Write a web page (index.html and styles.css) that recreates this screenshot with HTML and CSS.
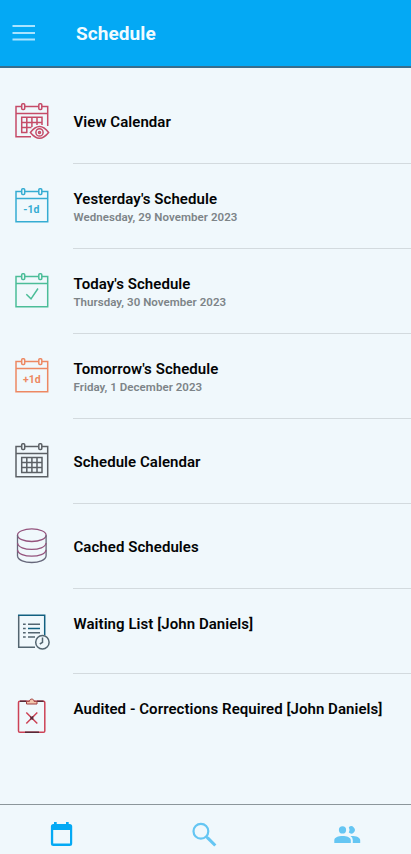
FILE: index.html
```html
<!DOCTYPE html>
<html lang="en">
<head>
<meta charset="utf-8">
<title>Schedule</title>
<link rel="stylesheet" href="styles.css">
</head>
<body>
<svg width="0" height="0" class="defs">
  <defs>
    <g id="cal">
      <path d="M21.5 16.5H16V46.7H47.7V16.5H42M25 16.5H38.5M16 23.4H47.7"/>
      <rect x="21.7" y="13.7" width="3" height="5.8" rx="1"/>
      <rect x="38.8" y="13.7" width="3" height="5.8" rx="1"/>
    </g>
  </defs>
</svg>
<div class="app">
  <header class="bar">
    <svg class="menu" viewBox="0 0 24 18"><path d="M.5 2H23M.5 9H23M.5 15.5H23"/></svg>
    <h1>Schedule</h1>
  </header>
  <main class="list">
    <div class="row">
      <svg class="icon red" viewBox="0 0 70 70">
        <path d="M21.5 16.5H16V46.7H31M47.7 36V16.5H42M25 16.5H38.5M16 23.4H47.7"/>
        <rect x="21.7" y="13.7" width="3" height="5.8" rx="1"/>
        <rect x="38.8" y="13.7" width="3" height="5.8" rx="1"/>
        <path d="M27.5 42.5H21.7V27.3H42V35M21.7 32.4H42M21.7 37.5H31.5M26.8 27.3V42.5M31.9 27.3V37M37 27.3V35"/>
        <path d="M30.4 42.5Q39.5 30.5 48.6 42.5Q39.5 54 30.4 42.5Z"/>
        <circle cx="39.5" cy="42.4" r="3.6"/><circle cx="39.5" cy="42.4" r="1"/>
      </svg>
      <div class="text"><b>View Calendar</b></div>
    </div>
    <div class="row double">
      <svg class="icon blue" viewBox="0 0 70 70"><use href="#cal"/><text x="31.4" y="37.7">-1d</text></svg>
      <div class="text"><b>Yesterday's Schedule</b><span>Wednesday, 29 November 2023</span></div>
    </div>
    <div class="row double">
      <svg class="icon green" viewBox="0 0 70 70"><use href="#cal"/><path d="M26.3 34.3L31 38.8L38 28.5"/></svg>
      <div class="text"><b>Today's Schedule</b><span>Thursday, 30 November 2023</span></div>
    </div>
    <div class="row double">
      <svg class="icon orange" viewBox="0 0 70 70"><use href="#cal"/><text x="31.8" y="38">+1d</text></svg>
      <div class="text"><b>Tomorrow's Schedule</b><span>Friday, 1 December 2023</span></div>
    </div>
    <div class="row">
      <svg class="icon gray" viewBox="0 0 70 70"><use href="#cal"/><path d="M21.7 27.5H42V42.6H21.7ZM21.7 32.5H42M21.7 37.5H42M26.8 27.5V42.6M31.9 27.5V42.6M37 27.5V42.6"/></svg>
      <div class="text"><b>Schedule Calendar</b></div>
    </div>
    <div class="row">
      <svg class="icon purple" viewBox="0 0 70 70">
        <ellipse cx="31.8" cy="20.2" rx="14.3" ry="6.3"/>
        <path class="side" d="M17.5 20.2V41.2M46.1 20.2V41.2"/>
        <path d="M17.5 28C18.5 36.5 45 36.5 46.1 28M17.5 34.8C18.5 43.3 45 43.3 46.1 34.8"/>
        <path class="side" d="M17.5 41.2C18.5 49.6 45 49.6 46.1 41.2"/>
      </svg>
      <div class="text"><b>Cached Schedules</b></div>
    </div>
    <div class="row raised">
      <svg class="icon slate" viewBox="0 0 70 70">
        <path d="M35 47.3H18.7V15.3"/>
        <path class="navy" d="M18 15.3H44.7V35"/>
        <path d="M23 24.2H25.7M23 28.5H25.7M23 32.7H25.7M23 37H25.7M28 24.2H40M28 32.7H40M28 37H35"/>
        <path class="navy" d="M28 28.5H40"/>
        <circle cx="42.4" cy="42.2" r="6.7"/>
        <path d="M42.5 37.6V42.3L39.8 44"/>
      </svg>
      <div class="text"><b>Waiting List [John Daniels]</b></div>
    </div>
    <div class="row raised">
      <svg class="icon crimson" viewBox="0 0 70 70">
        <rect x="18.5" y="16.3" width="26.3" height="31" rx="1.3"/>
        <path class="dark" d="M20 16.3H26.5M37 16.3H43.5M25 47.3H39"/>
        <path class="clip" d="M26.5 16.3H29.5C29.5 13.3 34 13.3 34 16.3H37V19H26.5Z"/>
        <path d="M26.3 27.5L37.3 38.5M37.3 27.5L26.3 38.5"/>
        <path class="dark" d="M30.3 31.5L33.3 34.5M33.3 31.5L30.3 34.5"/>
      </svg>
      <div class="text"><b>Audited - Corrections Required [John Daniels]</b></div>
    </div>
  </main>
  <nav class="tabs">
    <svg class="tab active" viewBox="0 0 28 28"><path fill-rule="evenodd" d="M6 2H8.7V4H18V2H20.7V4H21.7Q24.2 4 24.2 6.5V23.4Q24.2 25.9 21.7 25.9H5.4Q2.9 25.9 2.9 23.4V6.5Q2.9 4 5.4 4H6ZM5.2 10V23.5H22V10Z"/></svg>
    <svg class="tab" viewBox="0 0 28 28"><circle class="lens" cx="9.9" cy="11.2" r="7.4"/><path d="M14.5 17.7L16.1 16.1L18 17L25.4 24.4L23.2 26.6L15.8 19.2Z"/></svg>
    <svg class="tab" viewBox="0 0 28 28"><circle cx="9.5" cy="9.9" r="3.6"/><path d="M15.8 7.2A3.6 3.6 0 1 1 15.8 12.6Q17.3 9.9 15.8 7.2ZM1.3 23V20.2C1.3 14.6 17.8 14.6 17.8 20.2V23ZM18.3 16C23.5 16 27.2 17.5 27.2 20.2V23H19.8V20.2Q19.8 17.5 17.5 16.1Z"/></svg>
  </nav>
</div>
</body>
</html>
```
FILE: styles.css
```css
* { box-sizing: border-box; }
body { margin: 0; background: #f0f8fc; font-family: Roboto, "Liberation Sans", sans-serif; }
.defs { display: block; }
.app { width: 411px; height: 854px; display: flex; flex-direction: column; overflow: hidden; }
.bar { height: 68px; flex: none; display: flex; align-items: center; padding-left: 12px; background: #04a9f4; border-bottom: 2px solid #396e8c; }
.menu { width: 24px; height: 18px; fill: none; stroke: #a9e4ff; stroke-width: 2; }
h1 { margin: 1px 0 0 40px; font-size: 19px; line-height: 24px; font-weight: 700; letter-spacing: 0.08px; color: #f1fbff; }
.list { flex: 1; padding-top: 11px; }
.row { height: 85px; display: flex; }
.icon { flex: none; width: 70px; height: 70px; margin-top: 11px; fill: none; stroke: currentColor; stroke-width: 1.5; }
.icon text { font-size: 10.5px; font-weight: 700; text-anchor: middle; fill: currentColor; stroke: none; }
.text { flex: 1; margin-left: 3px; padding: 1px 0 0 0.5px; border-bottom: 1px solid #d3dade; display: flex; flex-direction: column; justify-content: center; white-space: nowrap; }
.row:last-child .text { border-color: transparent; }
.double .text { justify-content: flex-start; padding-top: 26px; }
.raised .text { justify-content: flex-start; padding-top: 26.4px; }
.text b { font-size: 15px; line-height: 18px; font-weight: 600; letter-spacing: 0.06px; color: #030405; }
.text span { font-size: 11.5px; line-height: 18px; font-weight: 600; letter-spacing: 0.05px; color: #7d8488; }
.red { color: #c54b68; }
.blue { color: #35acd2; }
.green { color: #4bbd98; }
.orange { color: #ed8862; }
.gray { color: #5b6065; }
.purple { color: #94537d; stroke-width: 1.3; }
.purple .side { stroke: #66677a; }
.slate { color: #536570; }
.navy { stroke: #126080; }
.crimson { color: #cc4256; }
.dark { stroke: #572936; }
.clip { stroke: #9e3c3e; fill: #f3c7ad; stroke-width: 1; }
.tabs { height: 50px; flex: none; display: flex; justify-content: space-between; padding: 15px 50px 0 48px; border-top: 1px solid #8c969b; }
.tab { width: 28px; height: 28px; fill: #65c6f3; }
.active { fill: #04a9f4; }
.lens { fill: none; stroke: #65c6f3; stroke-width: 2.2; }
```
